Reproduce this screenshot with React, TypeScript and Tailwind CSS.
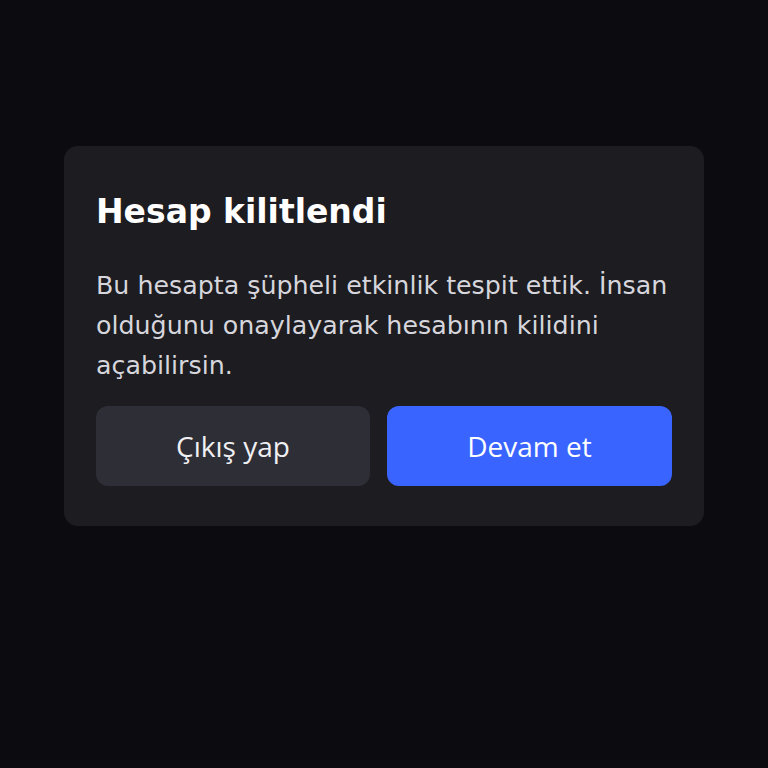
export default function App() {
  return (
    <div className="min-h-screen w-full bg-[#0c0c10] pt-[146px] px-[64px]" style={{ fontFamily: '"DejaVu Sans", sans-serif' }}>
      <div className="rounded-[14px] bg-[#1c1c21] px-[32px] pt-[46px] pb-[40px]">
        <h1 className="text-[33px] leading-[40px] font-bold text-white">Hesap kilitlendi</h1>
        <p className="mt-[34px] text-[25.3px] leading-[40px] text-[#d6d6dc]">
          Bu hesapta şüpheli etkinlik tespit ettik. İnsan olduğunu onaylayarak hesabının kilidini açabilirsin.
        </p>
        <div className="mt-[20px] grid grid-cols-[274px_1fr] gap-[17px]">
          <button className="h-[80px] rounded-[12px] bg-[#2e2e36] text-[28px] text-[#f0f0f3]" style={{ fontFamily: '"Open Sans", sans-serif' }}>Çıkış yap</button>
          <button className="h-[80px] rounded-[12px] bg-[#3a64ff] text-[28px] text-white" style={{ fontFamily: '"Open Sans", sans-serif' }}>Devam et</button>
        </div>
      </div>
    </div>
  );
}
